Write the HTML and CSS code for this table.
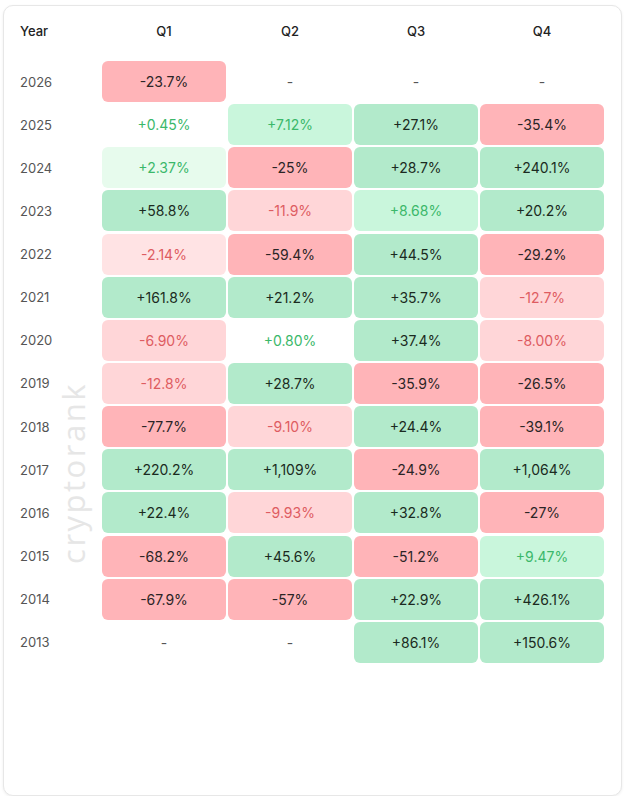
FILE: index.html
```html
<!DOCTYPE html>
<html>
<head>
<meta charset="utf-8">
<link rel="stylesheet" href="styles.css">
</head>
<body>
<div class="card">
  <div class="watermark">cryptorank</div>
  <div class="grid head">
    <div class="year hd">Year</div>
    <div class="hq">Q1</div>
    <div class="hq">Q2</div>
    <div class="hq">Q3</div>
    <div class="hq">Q4</div>
  </div>
  <div class="grid body">
    <div class="year">2026</div>
    <div class="c r3">-23.7%</div><div class="c dash">-</div><div class="c dash">-</div><div class="c dash">-</div>
    <div class="year">2025</div>
    <div class="c g0">+0.45%</div><div class="c g2">+7.12%</div><div class="c g3">+27.1%</div><div class="c r3">-35.4%</div>
    <div class="year">2024</div>
    <div class="c g1">+2.37%</div><div class="c r3">-25%</div><div class="c g3">+28.7%</div><div class="c g3">+240.1%</div>
    <div class="year">2023</div>
    <div class="c g3">+58.8%</div><div class="c r2">-11.9%</div><div class="c g2">+8.68%</div><div class="c g3">+20.2%</div>
    <div class="year">2022</div>
    <div class="c r1">-2.14%</div><div class="c r3">-59.4%</div><div class="c g3">+44.5%</div><div class="c r3">-29.2%</div>
    <div class="year">2021</div>
    <div class="c g3">+161.8%</div><div class="c g3">+21.2%</div><div class="c g3">+35.7%</div><div class="c r2">-12.7%</div>
    <div class="year">2020</div>
    <div class="c r2">-6.90%</div><div class="c g0">+0.80%</div><div class="c g3">+37.4%</div><div class="c r2">-8.00%</div>
    <div class="year">2019</div>
    <div class="c r2">-12.8%</div><div class="c g3">+28.7%</div><div class="c r3">-35.9%</div><div class="c r3">-26.5%</div>
    <div class="year">2018</div>
    <div class="c r3">-77.7%</div><div class="c r2">-9.10%</div><div class="c g3">+24.4%</div><div class="c r3">-39.1%</div>
    <div class="year">2017</div>
    <div class="c g3">+220.2%</div><div class="c g3">+1,109%</div><div class="c r3">-24.9%</div><div class="c g3">+1,064%</div>
    <div class="year">2016</div>
    <div class="c g3">+22.4%</div><div class="c r2">-9.93%</div><div class="c g3">+32.8%</div><div class="c r3">-27%</div>
    <div class="year">2015</div>
    <div class="c r3">-68.2%</div><div class="c g3">+45.6%</div><div class="c r3">-51.2%</div><div class="c g2">+9.47%</div>
    <div class="year">2014</div>
    <div class="c r3">-67.9%</div><div class="c r3">-57%</div><div class="c g3">+22.9%</div><div class="c g3">+426.1%</div>
    <div class="year">2013</div>
    <div class="c dash">-</div><div class="c dash">-</div><div class="c g3">+86.1%</div><div class="c g3">+150.6%</div>
  </div>
</div>
</body>
</html>
```

FILE: styles.css
```css
html, body {
  margin: 0;
  padding: 0;
  background: #ffffff;
}
body {
  font-family: Inter, "Noto Sans", "Liberation Sans", sans-serif;
  color: #1f2a25;
}
.card {
  position: relative;
  box-sizing: border-box;
  margin: 5px 0 0 3px;
  width: 619px;
  height: 791px;
  border: 1px solid #e7e7e7;
  border-radius: 10px;
  padding: 4px 16px 0 16px;
  box-shadow: 0 1px 3px rgba(0,0,0,0.07);
  background: #fff;
}
.grid {
  display: grid;
  grid-template-columns: 80px repeat(4, 124px);
  column-gap: 2px;
}
.head {
  height: 42px;
  align-items: center;
}
.body {
  margin-top: 9px;
  row-gap: 2.15px;
  grid-auto-rows: 41px;
}
.year {
  display: flex;
  align-items: center;
  font-size: 13px;
  color: #555;
}
.hd {
  color: #222;
  font-weight: 500;
}
.hq {
  text-align: center;
  font-size: 13px;
  font-weight: 500;
  color: #222;
}
.c {
  display: flex;
  align-items: center;
  justify-content: center;
  border-radius: 6px;
  font-size: 14px;
  color: #1f2a25;
}
.dash { color: #555; }
.r3 { background: #ffb4b8; color: #2b2526; }
.r2 { background: #ffd6d8; color: #de5c61; }
.r1 { background: #ffe3e4; color: #de5c61; }
.g3 { background: #b2eacb; color: #1b2a21; }
.g2 { background: #c9f6dc; color: #3bb86a; }
.g1 { background: #e7fbed; color: #3bb86a; }
.g0 { color: #3bb86a; }
.watermark {
  position: absolute;
  left: 69px;
  top: 467px;
  transform: translate(-50%, -50%) rotate(-90deg);
  font-family: "Open Sans", "Noto Sans", sans-serif;
  font-size: 31px;
  letter-spacing: 2.5px;
  color: #e6e6e6;
  white-space: nowrap;
  z-index: 0;
}
```
